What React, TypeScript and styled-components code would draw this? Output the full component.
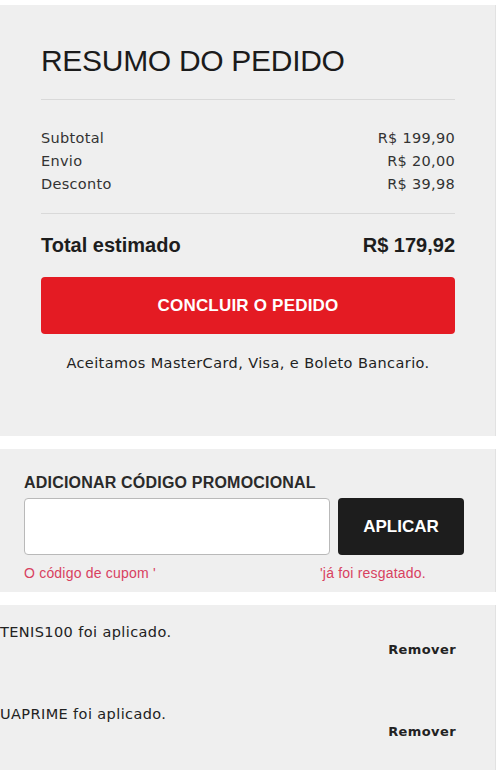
import styled, { createGlobalStyle } from "styled-components";

interface ILine {
  label: string;
  value: string;
}

interface ICoupon {
  code: string;
}

const lines: ILine[] = [
  { label: "Subtotal", value: "R$ 199,90" },
  { label: "Envio", value: "R$ 20,00" },
  { label: "Desconto", value: "R$ 39,98" },
];

const coupons: ICoupon[] = [{ code: "TENIS100" }, { code: "UAPRIME" }];

const GlobalStyle = createGlobalStyle`
  * { box-sizing: border-box; }
  body {
    margin: 0;
    background: #ffffff;
    font-family: "DejaVu Sans", Verdana, sans-serif;
    color: #222;
  }
`;

const Page = styled.div`
  display: flex;
  flex-direction: column;
  gap: 13px;
  padding-top: 5px;
  width: 496px;
`;

const Panel = styled.section`
  background: #efefef;
  border-right: 1px solid #e2e2e2;
`;

const Summary = styled(Panel)`
  padding: 38px 40px 64px 41px;
  height: 431px;
`;

const Title = styled.h1`
  margin: 0;
  font-family: "Liberation Sans", Arial, sans-serif;
  font-weight: 400;
  font-size: 30px;
  line-height: 36px;
  letter-spacing: -0.3px;
  color: #1b1b1b;
`;

const Divider = styled.hr<{ $top: number; $bottom: number }>`
  border: 0;
  height: 1px;
  background: #d9d9d9;
  margin: ${(p) => p.$top}px 0 ${(p) => p.$bottom}px;
`;

const Lines = styled.ul`
  list-style: none;
  margin: 0;
  padding: 0;
`;

const Line = styled.li`
  display: flex;
  justify-content: space-between;
  font-size: 14.5px;
  letter-spacing: 0.3px;
  line-height: 23px;
  color: #333;
`;

const TotalRow = styled.div`
  display: flex;
  justify-content: space-between;
  font-family: "Liberation Sans", Arial, sans-serif;
  font-weight: 700;
  font-size: 20px;
  line-height: 28px;
  color: #1d1d1d;
`;

const CheckoutButton = styled.button`
  display: block;
  width: 100%;
  height: 57px;
  margin-top: 18px;
  border: 0;
  border-radius: 4px;
  background: #e41b23;
  color: #fff;
  font-family: "Liberation Sans", Arial, sans-serif;
  font-weight: 700;
  font-size: 17px;
  letter-spacing: 0.2px;
`;

const Note = styled.p`
  margin: 20px 0 0;
  text-align: center;
  font-size: 14.5px;
  letter-spacing: 0.4px;
  line-height: 18px;
  color: #222;
`;

const Promo = styled(Panel)`
  padding: 25px 31px 11px 24px;
`;

const PromoTitle = styled.h2`
  margin: 0;
  font-family: "Liberation Sans", Arial, sans-serif;
  font-weight: 700;
  font-size: 16px;
  letter-spacing: 0.2px;
  line-height: 18px;
  color: #2a2a2a;
`;

const PromoForm = styled.div`
  display: flex;
  gap: 8px;
  margin-top: 6px;
`;

const CodeInput = styled.input`
  flex: 0 0 306px;
  height: 57px;
  border: 1px solid #b9b9b9;
  border-radius: 4px;
  background: #fff;
`;

const ApplyButton = styled.button`
  flex: 1;
  height: 57px;
  border: 0;
  border-radius: 4px;
  background: #1d1d1d;
  color: #fff;
  font-family: "Liberation Sans", Arial, sans-serif;
  font-weight: 700;
  font-size: 17px;
`;

const ErrorRow = styled.div`
  display: flex;
  margin-top: 10px;
  font-family: "Liberation Sans", Arial, sans-serif;
  font-size: 14px;
  letter-spacing: 0.2px;
  line-height: 16px;
  color: #d8415f;
`;

const ErrorPart = styled.span<{ $width?: number }>`
  flex: 0 0 ${(p) => (p.$width ? `${p.$width}px` : "auto")};
`;

const Applied = styled(Panel)`
  padding: 18px 39px 29px 0;
  display: flex;
  flex-direction: column;
  gap: 46px;
`;

const Coupon = styled.div`
  display: flex;
  flex-direction: column;
`;

const CouponText = styled.span`
  font-size: 14.5px;
  letter-spacing: 0.4px;
  line-height: 18px;
  color: #222;
`;

const RemoveLink = styled.a`
  align-self: flex-end;
  font-size: 13px;
  font-weight: 700;
  letter-spacing: 0.4px;
  line-height: 18px;
  color: #222;
  cursor: pointer;
`;

function App() {
  return (
    <>
      <GlobalStyle />
      <Page>
        <Summary>
          <Title>RESUMO DO PEDIDO</Title>
          <Divider $top={20} $bottom={27} />
          <Lines>
            {lines.map((line) => (
              <Line key={line.label}>
                <span>{line.label}</span>
                <span>{line.value}</span>
              </Line>
            ))}
          </Lines>
          <Divider $top={17} $bottom={17} />
          <TotalRow>
            <span>Total estimado</span>
            <span>R$ 179,92</span>
          </TotalRow>
          <CheckoutButton>CONCLUIR O PEDIDO</CheckoutButton>
          <Note>Aceitamos MasterCard, Visa, e Boleto Bancario.</Note>
        </Summary>

        <Promo>
          <PromoTitle>ADICIONAR CÓDIGO PROMOCIONAL</PromoTitle>
          <PromoForm>
            <CodeInput type="text" />
            <ApplyButton>APLICAR</ApplyButton>
          </PromoForm>
          <ErrorRow>
            <ErrorPart $width={296}>O código de cupom '</ErrorPart>
            <ErrorPart>'já foi resgatado.</ErrorPart>
          </ErrorRow>
        </Promo>

        <Applied>
          {coupons.map((coupon) => (
            <Coupon key={coupon.code}>
              <CouponText>{coupon.code} foi aplicado.</CouponText>
              <RemoveLink>Remover</RemoveLink>
            </Coupon>
          ))}
        </Applied>
      </Page>
    </>
  );
}

export default App;
